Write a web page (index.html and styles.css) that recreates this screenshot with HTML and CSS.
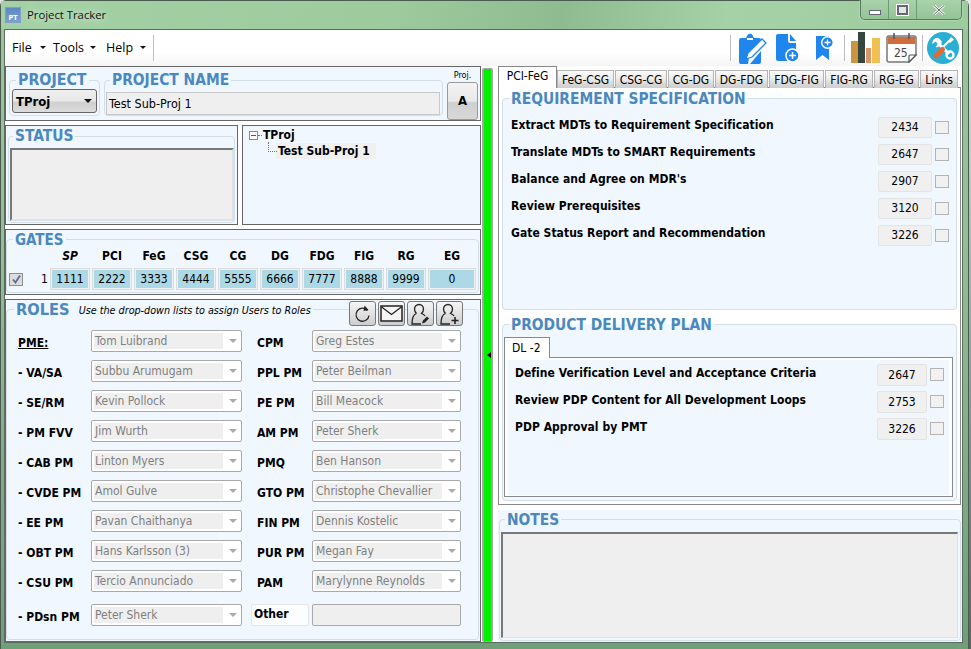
FILE: index.html
```html
<!DOCTYPE html>
<html lang="en">
<head>
    <meta charset="UTF-8">
    <meta name="viewport" content="width=device-width, initial-scale=1.0">
    <title>Project Tracker</title>
    <link rel="stylesheet" href="styles.css">
</head>
<body>
    <div class="window">
        <div class="titlebar">
            <div class="app-icon">PT</div>
            <div class="app-title">Project Tracker</div>
            <div class="window-controls">
                <div class="win-btn win-min"><span class="min-glyph"></span></div>
                <div class="win-btn win-max"><span class="max-glyph"></span></div>
                <div class="win-btn win-close">
                    <svg width="12" height="10" viewBox="0 0 12 10"><path d="M1 0.5l10 9M11 0.5l-10 9" stroke="#fff" stroke-width="2.4" fill="none"/><path d="M1 0.5l10 9M11 0.5l-10 9" stroke="#667" stroke-width="1" fill="none"/></svg>
                </div>
            </div>
        </div>

        <div class="client">
            <div class="toolbar">
                <div class="menu-item menu-file">File</div>
                <div class="menu-item menu-tools">Tools</div>
                <div class="menu-item menu-help">Help</div>
                <div class="tool-sep first-sep"></div>
                <div class="tool-sep sep-a"></div>
                <svg class="tool-icon icon-clip" width="30" height="32" viewBox="0 0 30 32">
                    <path fill="#1f86ee" d="M3 6h5l1.500-3a3 3 0 0 1 5 0L16 6h5a2 2 0 0 1 2 2v5L11 25l-1 7H3a2 2 0 0 1-2-2V8a2 2 0 0 1 2-2z"/>
                    <path fill="#1f86ee" d="M23 19v11a2 2 0 0 1-2 2H12z"/>
                    <path fill="#fff" d="M9 6h6v2H9z"/>
                    <path fill="#fff" stroke="#1f86ee" stroke-width="1.300" d="M24 7l4 4-14 14-6 2 2-6z"/>
                </svg>
                <svg class="tool-icon icon-doc" width="24" height="30" viewBox="0 0 24 30">
                    <path fill="#1f86ee" d="M2 1h10v7a2 2 0 0 0 2 2h6v18H2a2 2 0 0 1-2-2V3a2 2 0 0 1 2-2z"/>
                    <path fill="#1f86ee" d="M14 1l6 7h-6z"/>
                    <circle cx="16.500" cy="22.500" r="6.500" fill="#1f86ee" stroke="#fff" stroke-width="1.500"/>
                    <path d="M16.500 19v7M13 22.500h7" stroke="#fff" stroke-width="1.500"/>
                </svg>
                <svg class="tool-icon icon-mark" width="18" height="26" viewBox="0 0 18 26">
                    <path fill="#1f86ee" d="M0 1h13v24l-6.500-5L0 25z"/>
                    <circle cx="11.500" cy="7.500" r="5.800" fill="#1f86ee" stroke="#fff" stroke-width="1.400"/>
                    <path d="M11.500 4.500v6M8.500 7.500h6" stroke="#fff" stroke-width="1.300"/>
                </svg>
                <div class="tool-sep sep-b"></div>
                <svg class="tool-icon icon-chart" width="29" height="32" viewBox="0 0 29 32">
                    <path fill="#c9963e" d="M0 9h7v22H0z"/>
                    <path fill="#35473f" d="M7 0h7v31H7z"/>
                    <path fill="#d9966a" d="M15 16h5v15h-5z"/>
                    <path fill="#f0c050" d="M21 6h8v25h-8z"/>
                </svg>
                <svg class="tool-icon icon-cal" width="32" height="30" viewBox="0 0 32 30">
                    <path fill="#fff" stroke="#777" stroke-width="1.500" d="M3 3h25a2 2 0 0 1 2 2v17l-7 7H3a2 2 0 0 1-2-2V5a2 2 0 0 1 2-2z"/>
                    <path fill="#cf6d3c" d="M2 4h27v7H2z"/>
                    <path d="M8 0v6M23 0v6" stroke="#555" stroke-width="1.500"/>
                    <path fill="#fff" stroke="#555" stroke-width="1.200" d="M23 29v-6a1 1 0 0 1 1-1h6z"/>
                    <text class="cal-text" x="8" y="24">25</text>
                </svg>
                <div class="tool-sep sep-c"></div>
                <svg class="tool-icon icon-tools" width="32" height="32" viewBox="0 0 32 32">
                    <circle cx="16" cy="16" r="16" fill="#29afd6"/>
                    <path d="M11 11l11 11" stroke="#fff" stroke-width="3"/>
                    <path d="M11.500 6a5 5 0 0 0-6 6l3-2.500 2.500 2.500-2.500 3a5 5 0 0 0 6-6z" fill="#fff"/>
                    <circle cx="23" cy="23" r="3.500" fill="none" stroke="#fff" stroke-width="2.400"/>
                    <path d="M16 15l6-6" stroke="#fff" stroke-width="2.200"/>
                    <path d="M21 9l3-4 3 2.500-4 3.500z" fill="#fff"/>
                    <path d="M9 24l6.500-6.500" stroke="#dd6b3a" stroke-width="5" stroke-linecap="round"/>
                </svg>
            </div>

            <div class="workspace">
                <div class="left-col">
                    <div class="panel project-panel">
                        <fieldset class="group project-group">
                            <legend class="group-title">PROJECT</legend>
                            <div class="project-select">TProj<span class="caret"></span></div>
                        </fieldset>
                        <fieldset class="group name-group">
                            <legend class="group-title">PROJECT NAME</legend>
                            <div class="name-input">Test Sub-Proj 1</div>
                        </fieldset>
                        <div class="proj-box">
                            <div class="proj-label">Proj.</div>
                            <div class="proj-btn">A</div>
                        </div>
                    </div>

                    <div class="status-row">
                        <div class="panel status-panel">
                            <fieldset class="group status-group">
                                <legend class="group-title">STATUS</legend>
                                <div class="status-box"></div>
                            </fieldset>
                        </div>
                        <div class="panel tree-panel">
                            <div class="tree-node tree-root"><span class="tree-toggle"></span>TProj</div>
                            <div class="tree-node tree-child"><span class="tree-selected">Test Sub-Proj 1</span></div>
                        </div>
                    </div>

                    <div class="panel gates-panel">
                        <fieldset class="group gates-group">
                            <legend class="group-title">GATES</legend>
                            <div class="gates-grid">
                                <div></div>
                                <div class="gate-head gate-sp">SP</div>
                                <div class="gate-head">PCI</div>
                                <div class="gate-head">FeG</div>
                                <div class="gate-head">CSG</div>
                                <div class="gate-head">CG</div>
                                <div class="gate-head">DG</div>
                                <div class="gate-head">FDG</div>
                                <div class="gate-head">FIG</div>
                                <div class="gate-head">RG</div>
                                <div class="gate-head">EG</div>
                                <div class="gate-index"><span class="check checked">
                                    <svg width="11" height="11" viewBox="0 0 11 11"><path d="M2 5.500l2.500 3L9 1.500" stroke="#5a6a9a" stroke-width="1.800" fill="none"/></svg>
                                </span><span class="gate-num">1</span></div>
                                <div class="gate-cell">1111</div>
                                <div class="gate-cell">2222</div>
                                <div class="gate-cell">3333</div>
                                <div class="gate-cell">4444</div>
                                <div class="gate-cell">5555</div>
                                <div class="gate-cell">6666</div>
                                <div class="gate-cell">7777</div>
                                <div class="gate-cell">8888</div>
                                <div class="gate-cell">9999</div>
                                <div class="gate-cell">0</div>
                            </div>
                        </fieldset>
                    </div>

                    <div class="panel roles-panel">
                        <fieldset class="group roles-group">
                            <legend class="group-title roles-title">ROLES <span class="roles-hint">Use the drop-down lists to assign Users to Roles</span></legend>
                            <div class="role-row">
                                <span class="role-label role-pme">PME:</span>
                                <div class="combo"><span class="combo-text">Tom Luibrand</span></div>
                                <span class="role-label role-right">CPM</span>
                                <div class="combo combo-right"><span class="combo-text">Greg Estes</span></div>
                            </div>
                            <div class="role-row">
                                <span class="role-label">- VA/SA</span>
                                <div class="combo"><span class="combo-text">Subbu Arumugam</span></div>
                                <span class="role-label role-right">PPL PM</span>
                                <div class="combo combo-right"><span class="combo-text">Peter Beilman</span></div>
                            </div>
                            <div class="role-row">
                                <span class="role-label">- SE/RM</span>
                                <div class="combo"><span class="combo-text">Kevin Pollock</span></div>
                                <span class="role-label role-right">PE PM</span>
                                <div class="combo combo-right"><span class="combo-text">Bill Meacock</span></div>
                            </div>
                            <div class="role-row">
                                <span class="role-label">- PM FVV</span>
                                <div class="combo"><span class="combo-text">Jim Wurth</span></div>
                                <span class="role-label role-right">AM PM</span>
                                <div class="combo combo-right"><span class="combo-text">Peter Sherk</span></div>
                            </div>
                            <div class="role-row">
                                <span class="role-label">- CAB PM</span>
                                <div class="combo"><span class="combo-text">Linton Myers</span></div>
                                <span class="role-label role-right">PMQ</span>
                                <div class="combo combo-right"><span class="combo-text">Ben Hanson</span></div>
                            </div>
                            <div class="role-row">
                                <span class="role-label">- CVDE PM</span>
                                <div class="combo"><span class="combo-text">Amol Gulve</span></div>
                                <span class="role-label role-right">GTO PM</span>
                                <div class="combo combo-right"><span class="combo-text">Christophe Chevallier</span></div>
                            </div>
                            <div class="role-row">
                                <span class="role-label">- EE PM</span>
                                <div class="combo"><span class="combo-text">Pavan Chaithanya</span></div>
                                <span class="role-label role-right">FIN PM</span>
                                <div class="combo combo-right"><span class="combo-text">Dennis Kostelic</span></div>
                            </div>
                            <div class="role-row">
                                <span class="role-label">- OBT PM</span>
                                <div class="combo"><span class="combo-text">Hans Karlsson (3)</span></div>
                                <span class="role-label role-right">PUR PM</span>
                                <div class="combo combo-right"><span class="combo-text">Megan Fay</span></div>
                            </div>
                            <div class="role-row">
                                <span class="role-label">- CSU PM</span>
                                <div class="combo"><span class="combo-text">Tercio Annunciado</span></div>
                                <span class="role-label role-right">PAM</span>
                                <div class="combo combo-right"><span class="combo-text">Marylynne Reynolds</span></div>
                            </div>
                            <div class="role-row role-last">
                                <span class="role-label">- PDsn PM</span>
                                <div class="combo"><span class="combo-text">Peter Sherk</span></div>
                                <span class="other-label">Other</span>
                                <div class="other-input"></div>
                            </div>
                        </fieldset>
                        <div class="role-actions">
                            <div class="icon-btn">
                                <svg width="20" height="20" viewBox="0 0 20 20"><path d="M14.500 6.500a6.500 6.500 0 1 0 1.500 5" fill="none" stroke="#222" stroke-width="1.300"/><path d="M11.500 1.500l4 4.500-5 1z" fill="#222"/></svg>
                            </div>
                            <div class="icon-btn">
                                <svg width="23" height="17" viewBox="0 0 23 17"><rect x="1" y="1" width="21" height="15" fill="#f4f4f4" stroke="#222" stroke-width="1.500"/><path d="M1 1.500l10.500 8 10.500-8" fill="none" stroke="#222" stroke-width="1.300"/></svg>
                            </div>
                            <div class="icon-btn">
                                <svg width="21" height="22" viewBox="0 0 21 22"><path d="M9 1.500a4.500 4.500 0 0 1 4.500 4.500c0 2-1 3.500-2 4.500 1.500.5 3 1.500 3.500 2.500M6.500 10.500C3.500 11.500 2 14 2 21h9M9 1.500A4.500 4.500 0 0 0 4.500 6c0 2 1 3.500 2 4.500" fill="none" stroke="#222" stroke-width="1.300"/><path d="M12 20.500l1-3 4-4 2 2-4 4z" fill="#222"/></svg>
                            </div>
                            <div class="icon-btn">
                                <svg width="21" height="22" viewBox="0 0 21 22"><path d="M9 1.500a4.500 4.500 0 0 1 4.500 4.500c0 2-1 3.500-2 4.500 1.500.5 3 1.500 3.500 2.500M6.500 10.500C3.500 11.500 2 14 2 21h9M9 1.500A4.500 4.500 0 0 0 4.500 6c0 2 1 3.500 2 4.500" fill="none" stroke="#222" stroke-width="1.300"/><path d="M16 14v7M12.500 17.500h7" stroke="#222" stroke-width="1.600"/></svg>
                            </div>
                        </div>
                    </div>
                </div>

                <div class="splitter"><span class="splitter-arrow"></span></div>

                <div class="right-col">
                    <div class="tab-strip">
                        <div class="tab tab-active">PCI-FeG</div>
                        <div class="tab">FeG-CSG</div>
                        <div class="tab">CSG-CG</div>
                        <div class="tab">CG-DG</div>
                        <div class="tab">DG-FDG</div>
                        <div class="tab">FDG-FIG</div>
                        <div class="tab">FIG-RG</div>
                        <div class="tab">RG-EG</div>
                        <div class="tab">Links</div>
                    </div>
                    <div class="tab-page">
                        <fieldset class="group req-group">
                            <legend class="group-title">REQUIREMENT SPECIFICATION</legend>
                            <div class="task-row"><span class="task-label">Extract MDTs to Requirement Specification</span><span class="task-value">2434</span><span class="check"></span></div>
                            <div class="task-row"><span class="task-label">Translate MDTs to SMART Requirements</span><span class="task-value">2647</span><span class="check"></span></div>
                            <div class="task-row"><span class="task-label">Balance and Agree on MDR's</span><span class="task-value">2907</span><span class="check"></span></div>
                            <div class="task-row"><span class="task-label">Review Prerequisites</span><span class="task-value">3120</span><span class="check"></span></div>
                            <div class="task-row"><span class="task-label">Gate Status Report and Recommendation</span><span class="task-value">3226</span><span class="check"></span></div>
                        </fieldset>
                        <fieldset class="group pdp-group">
                            <legend class="group-title">PRODUCT DELIVERY PLAN</legend>
                            <div class="subtab">DL -2</div>
                            <div class="subtab-page">
                                <div class="subtab-inner">
                                    <div class="task-row"><span class="task-label">Define Verification Level and Acceptance Criteria</span><span class="task-value">2647</span><span class="check"></span></div>
                                    <div class="task-row"><span class="task-label">Review PDP Content for All Development Loops</span><span class="task-value">2753</span><span class="check"></span></div>
                                    <div class="task-row"><span class="task-label">PDP Approval by PMT</span><span class="task-value">3226</span><span class="check"></span></div>
                                </div>
                            </div>
                        </fieldset>
                    </div>
                    <div class="notes-section">
                        <fieldset class="group notes-group">
                            <legend class="group-title">NOTES</legend>
                            <div class="notes-box"></div>
                        </fieldset>
                    </div>
                </div>
            </div>
        </div>
    </div>
</body>
</html>
```

FILE: styles.css
```css
/* Global Styles */
* {
    box-sizing: border-box;
}

body {
    margin: 0;
    width: 971px;
    height: 649px;
    overflow: hidden;
    background: linear-gradient(#e6e9e6, #5f6068);
    font-family: "DejaVu Sans Condensed", "DejaVu Sans", sans-serif;
    font-size: 12px;
    color: #000;
}

/* Window frame */
.window {
    width: 969px;
    height: 649px;
    display: flex;
    flex-direction: column;
    border: 1px solid #4c5a50;
    border-bottom: none;
    border-radius: 6px 6px 0 0;
    background: linear-gradient(#98c89a 0, #8fbf92 40%, #6f9f78 100%);
}

.titlebar {
    height: 28px;
    flex: none;
    display: flex;
    align-items: flex-start;
    padding-left: 4px;
    background: linear-gradient(100deg, #a3d1a5 0, #9dcb9e 40%, #8ebb8f 58%, #a5d1a6 75%, #9ccb9d 100%);
}

.app-icon {
    width: 16px;
    height: 16px;
    margin-top: 6px;
    padding-top: 6px;
    background: linear-gradient(#5c88c4, #7d9fd0);
    border: 1px solid #7f9ecb;
    color: #fff;
    font-size: 7px;
    line-height: 8px;
    font-weight: bold;
    text-align: center;
}

.app-title {
    margin: 5px 0 0 6px;
    font-family: "Open Sans", sans-serif;
    font-size: 11.300px;
    line-height: 18px;
    color: #111;
    text-shadow: 0 0 6px #cfe8d0, 0 0 10px #cfe8d0;
}

.window-controls {
    margin-left: auto;
    margin-right: 6px;
    margin-top: -1px;
    height: 20px;
    display: flex;
    border: 1px solid #567a5e;
    border-top: none;
    border-radius: 0 0 5px 5px;
    box-shadow: 0 0 0 1px rgba(255, 255, 255, 0.2);
}

.win-btn {
    height: 100%;
    display: flex;
    align-items: center;
    justify-content: center;
    border-left: 1px solid #6f9a78;
    background: linear-gradient(#a9d3ab, #94c396);
}

.win-min {
    width: 27px;
    border-left: none;
    border-radius: 0 0 0 5px;
}

.win-max {
    width: 28px;
}

.win-close {
    width: 45px;
    border-radius: 0 0 5px 0;
}

.min-glyph {
    width: 12px;
    height: 5px;
    margin-top: 6px;
    background: #fff;
    border: 1px solid #667;
}

.max-glyph {
    width: 11px;
    height: 10px;
    background: #dfe8e0;
    border: 2px solid #667;
    outline: 1px solid #fff;
}

.client {
    flex: 1;
    margin: 0 5px 6px 3px;
    display: flex;
    flex-direction: column;
    border: 1px solid #5f6b62;
    background-color: #fff;
    min-height: 0;
}

/* Toolbar */
.toolbar {
    height: 36px;
    flex: none;
    display: flex;
    align-items: center;
    background: linear-gradient(#fff 0, #fff 60%, #f5f5f5 100%);
}

.menu-item {
    position: relative;
    font-family: "Open Sans", sans-serif;
    font-size: 12.500px;
    line-height: 18px;
}

.menu-item::after {
    content: "";
    position: absolute;
    top: 7px;
    border: 3px solid transparent;
    border-top: 3px solid #111;
}

.menu-file {
    margin-left: 7px;
    width: 41px;
}

.menu-file::after {
    left: 28px;
}

.menu-tools {
    width: 53px;
}

.menu-tools::after {
    left: 37px;
}

.menu-help::after {
    left: 34px;
}

.menu-help {
    width: 47px;
}

.tool-sep {
    width: 1px;
    height: 26px;
    background-color: #bdbdbd;
    box-shadow: 1px 0 0 #fff;
}

.sep-a {
    margin-left: 576px;
}

.icon-clip {
    margin-left: 7px;
}

.icon-doc {
    margin-left: 8px;
}

.icon-mark {
    margin-left: 16px;
}

.sep-b {
    margin-left: 10px;
}

.icon-chart {
    margin-left: 6px;
}

.icon-cal {
    margin-left: 6px;
}

.sep-c {
    margin-left: 4px;
}

.icon-tools {
    margin-left: 4px;
}

.tool-icon {
    flex: none;
}

.cal-text {
    font-size: 12px;
    fill: #444;
}

/* Main area */
.workspace {
    flex: 1;
    min-height: 0;
    display: flex;
}

.left-col {
    width: 476px;
    flex: none;
    display: flex;
    flex-direction: column;
    gap: 4px;
}

.panel {
    border: 1px solid #666;
    background-color: #f0f7ff;
}

.group {
    margin: 0;
    padding: 0;
    min-width: 0;
    border: 1px solid #d3dfe8;
    border-radius: 4px;
}

.group-title {
    padding: 0 2px;
    margin-left: 4px;
    height: 18px;
    line-height: 20px;
    font-size: 15.400px;
    font-weight: bold;
    white-space: nowrap;
    color: #4a88bd;
}

/* Project row */
.project-panel {
    height: 55px;
    flex: none;
    display: flex;
    padding: 4px 1px 0 3px;
}

.project-panel .group-title {
    line-height: 18px;
}

.project-group {
    width: 91px;
    height: 45px;
    padding: 0 2px;
}

.project-group .group-title {
    margin-left: 4px;
    font-size: 15.800px;
}

.project-select {
    position: relative;
    height: 24px;
    padding-left: 3px;
    line-height: 23px;
    font-weight: bold;
    font-size: 13px;
    border: 1px solid #666;
    border-radius: 3px;
    background: linear-gradient(#efefef 0, #e8e8e8 50%, #cfcfcf 55%, #dcdcdc 100%);
}

.caret {
    position: absolute;
    right: 4px;
    top: 9px;
    border: 4px solid transparent;
    border-top: 4px solid #111;
}

.name-group {
    width: 339px;
    height: 45px;
    margin-left: 4px;
    padding: 3px 2px 0 1px;
}

.name-group .group-title {
    margin-left: 4px;
}

.name-input {
    height: 23px;
    padding-left: 2px;
    line-height: 22px;
    font-size: 12.500px;
    border: 1px solid #c8c8c8;
    background-color: #efefef;
}

.proj-box {
    margin: -3px 0 0 3px;
    width: 33px;
}

.proj-label {
    height: 14px;
    line-height: 14px;
    font-size: 9px;
    text-align: center;
}

.proj-btn {
    height: 38px;
    width: 31px;
    margin: 0 auto;
    line-height: 36px;
    font-weight: bold;
    font-size: 13px;
    text-align: center;
    border: 1px solid #9a9a9a;
    border-radius: 3px;
    background: linear-gradient(#f3f3f3 0, #e9e9e9 50%, #cfcfcf 55%, #d8d8d8 100%);
}

/* Status and tree */
.status-row {
    height: 100px;
    flex: none;
    display: flex;
    gap: 4px;
}

.status-panel {
    width: 233px;
    padding: 1px 2px;
}

.status-group {
    height: 96px;
    padding: 3px 0 0 1px;
}

.status-group .group-title {
    margin-left: 3px;
    line-height: 18px;
}

.status-box {
    width: 224px;
    height: 73px;
    background-color: #efefef;
    border: 2px solid #dfe2e4;
    border-top-color: #777;
    border-left-color: #777;
}

.tree-panel {
    flex: 1;
    padding-top: 1px;
}

.tree-node {
    position: relative;
    height: 16px;
    line-height: 16px;
    font-weight: bold;
    font-size: 12px;
}

.tree-root {
    padding-left: 20px;
}

.tree-child {
    padding-left: 33px;
}

.tree-selected {
    display: inline-block;
    width: 100px;
    padding-left: 2px;
    background-color: #f0f0f0;
}

.tree-toggle {
    position: absolute;
    left: 6px;
    top: 4px;
    width: 9px;
    height: 9px;
    border: 1px solid #888;
    background: linear-gradient(#556, #556) center / 5px 1px no-repeat #fff;
}

.tree-root::after {
    content: "";
    position: absolute;
    left: 15px;
    top: 8px;
    width: 4px;
    border-top: 1px dotted #777;
}

.tree-child::before {
    content: "";
    position: absolute;
    left: 25px;
    top: -1px;
    width: 8px;
    height: 9px;
    border-left: 1px dotted #777;
    border-bottom: 1px dotted #777;
}

/* Gates */
.gates-panel {
    height: 66px;
    flex: none;
}

.gates-group {
    margin-right: 1px;
    height: 63px;
}

.gates-group .group-title {
    margin-left: 6px;
    font-size: 15px;
}

.gates-grid {
    display: grid;
    grid-template-columns: 41px repeat(9, 40px) 48px;
    grid-template-rows: 18px 22px;
    gap: 2px;
}

.gate-head {
    font-weight: bold;
    font-size: 12px;
    line-height: 17px;
    text-align: center;
}

.gate-sp {
    font-style: italic;
}

.gate-index {
    display: flex;
    align-items: center;
    padding-left: 2px;
}

.gate-num {
    margin-left: 18px;
    font-size: 12px;
}

.gate-cell {
    height: 22px;
    line-height: 18px;
    text-align: center;
    font-size: 12px;
    background-color: #add8e6;
    border: 2px solid #eef1f3;
    outline: 1px solid #dcdcdc;
    outline-offset: -1px;
}

.check {
    flex: none;
    display: flex;
    align-items: center;
    justify-content: center;
    width: 14px;
    height: 13px;
    border: 1px solid #b4b4b4;
    background-color: #f1f1f1;
}

.check.checked {
    background-color: #dcdcdc;
    border-color: #8f8f8f;
}

/* Roles */
.roles-panel {
    flex: 1;
    min-height: 0;
    position: relative;
}

.roles-group {
    height: 340px;
    margin-right: 1px;
    padding: 12px 0 0 11px;
}

.roles-title {
    font-size: 16.300px;
    margin-left: -4px;
}

.roles-hint {
    margin-left: 4px;
    font-size: 10.700px;
    font-weight: normal;
    font-style: italic;
    color: #000;
    vertical-align: 1px;
}

.role-row {
    display: flex;
    height: 22px;
    margin-bottom: 8px;
    align-items: center;
}

.role-last {
    margin-top: 12px;
}

.role-label {
    width: 73px;
    flex: none;
    padding-top: 3px;
    font-weight: bold;
    font-size: 12px;
    white-space: nowrap;
}

.role-pme {
    text-decoration: underline;
}

.role-right {
    width: 55px;
    margin-left: 15px;
}

.combo {
    position: relative;
    width: 151px;
    height: 22px;
    flex: none;
    padding: 2px 18px 2px 2px;
    border: 1px solid #a9a9a9;
    border-radius: 2px;
    background-color: #fff;
}

.combo-right {
    width: 149px;
}

.combo::after {
    content: "";
    position: absolute;
    right: 4px;
    top: 8px;
    border: 4px solid transparent;
    border-top: 4px solid #a9a9a9;
}

.combo-text {
    display: block;
    height: 16px;
    padding-left: 1px;
    line-height: 16px;
    color: #808080;
    background-color: #efefef;
    font-size: 12px;
    white-space: nowrap;
}

.other-label {
    width: 58px;
    height: 22px;
    flex: none;
    margin: 0 3px 0 9px;
    padding-left: 2px;
    line-height: 19px;
    font-weight: bold;
    border: 1px solid #e4e6e8;
    border-radius: 2px;
    background-color: #fbfdff;
}

.other-input {
    width: 149px;
    height: 22px;
    border: 1px solid #a9a9a9;
    border-radius: 2px;
    background-color: #efefef;
}

.role-actions {
    position: absolute;
    top: 1px;
    left: 343px;
    display: flex;
    gap: 2px;
}

.icon-btn {
    width: 27px;
    height: 25px;
    display: flex;
    align-items: center;
    justify-content: center;
    border: 1px solid #777;
    border-radius: 3px;
    background: linear-gradient(#f6f6f6, #cdcdcd);
}

/* Splitter */
.splitter {
    position: relative;
    width: 11px;
    flex: none;
    margin: 2px 5px 0 1px;
    border: 2px solid #a4a4a4;
    border-top-width: 1px;
    border-bottom-width: 1px;
    border-radius: 2px;
    background-color: #00f000;
}

.splitter-arrow {
    position: absolute;
    left: 0;
    top: 283px;
    border: 3px solid transparent;
    border-right: 4px solid #000;
}

/* Tabs */
.right-col {
    width: 464px;
    flex: none;
    display: flex;
    flex-direction: column;
}

.tab-strip {
    height: 21px;
    flex: none;
    display: grid;
    grid-template-columns: 58px 57px 52px 46px 53px 55px 48px 45px 38px;
    column-gap: 1px;
    align-items: end;
}

.tab {
    position: relative;
    height: 18px;
    margin-bottom: -1px;
    text-align: center;
    line-height: 18px;
    font-size: 12px;
    border: 1px solid #b4b4b4;
    border-bottom: none;
    background: linear-gradient(#fafafa 0, #ececec 45%, #d6d6d6 80%, #cfcfcf 100%);
}

.tab-active {
    z-index: 1;
    width: 59px;
    height: 22px;
    margin-bottom: -1px;
    line-height: 19px;
    border-color: #888;
    background: #fff;
}

.tab-page {
    height: 418px;
    flex: none;
    margin-right: 1px;
    padding: 1px 3px 0;
    border: 1px solid #8a8a8a;
}

.req-group {
    height: 221px;
    padding: 10px 7px 0 8px;
    background-color: #f0f7ff;
}

.req-group .group-title {
    margin-left: -2px;
}

.task-row {
    display: flex;
    height: 21px;
    margin-bottom: 6px;
}

.task-label {
    flex: 1;
    padding-top: 1px;
    line-height: 15px;
    font-weight: bold;
    font-size: 12px;
    letter-spacing: 0.04px;
    white-space: nowrap;
}

.task-value {
    width: 54px;
    flex: none;
    line-height: 19px;
    text-align: center;
    font-size: 12px;
    background-color: #f0f0f0;
    border: 1px solid #e4e4e4;
    border-radius: 2px;
}

.task-row .check {
    margin: 4px 0 0 3px;
}

.pdp-group {
    height: 186px;
    margin-top: 5px;
    padding: 4px 3px 0 1px;
    background-color: #f0f7ff;
}

.pdp-group .group-title {
    margin-left: 5px;
}

.subtab {
    position: relative;
    z-index: 1;
    width: 46px;
    height: 21px;
    line-height: 20px;
    padding-left: 7px;
    border: 1px solid #888;
    border-bottom: none;
    background-color: #fff;
}

.subtab-page {
    height: 140px;
    margin-top: -1px;
    padding: 2px 3px 0;
    border: 1px solid #8a8a8a;
    background-color: #fff;
}

.subtab-inner {
    height: 135px;
    padding: 4px 5px 0 7px;
    background-color: #f0f7ff;
}

.subtab-inner .task-row {
    height: 22px;
    margin-bottom: 5px;
}

.subtab-inner .task-label {
    padding-top: 2px;
}

.subtab-inner .task-value {
    width: 50px;
    line-height: 20px;
}

/* Notes */
.notes-section {
    height: 132px;
    margin-top: 5px;
    background-color: #f0f7ff;
}

.notes-group {
    height: 131px;
    margin: 0 1px;
    padding: 4px 2px 0 1px;
}

.notes-group .group-title {
    margin-left: 4px;
}

.notes-box {
    height: 106px;
    background-color: #efefef;
    border: 1px solid #e0e0e0;
    border-top: 2px solid #777;
    border-left: 2px solid #777;
}
```
